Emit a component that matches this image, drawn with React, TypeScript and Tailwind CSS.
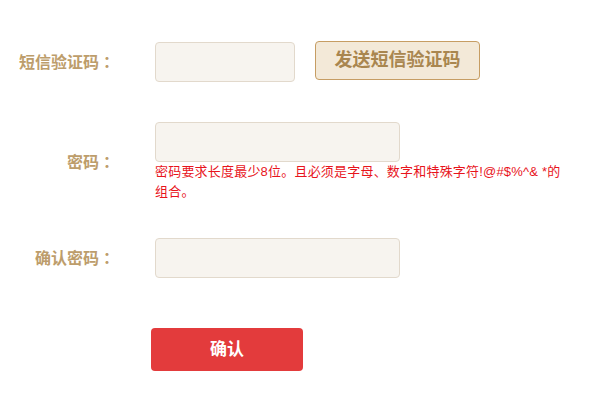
import React from "react";

function Colon() {
  return <span className="[font-family:'Noto_Sans_CJK_TC',sans-serif]">：</span>;
}

export default function App() {
  return (
    <div className="w-[601px] h-[400px] bg-white pt-[42px] [font-family:'Liberation_Sans','Noto_Sans_CJK_SC',sans-serif]">
      <div className="flex items-center">
        <div className="w-[115px] text-right text-[16px] font-bold text-[#bd9d6b] leading-none">
          短信验证码<Colon />
        </div>
        <div className="ml-[40px] w-[140px] h-[40px] rounded-[4px] border border-[#e2d9cc] bg-[#f7f4ef]" />
        <button className="ml-[20px] w-[165px] h-[39px] -mt-[3px] rounded-[4px] border border-[#c69d63] bg-[#f3e9d8] text-[18px] font-bold text-[#a9864f]">
          发送短信验证码
        </button>
      </div>
      <div className="flex items-center mt-[40px]">
        <div className="w-[115px] text-right text-[16px] font-bold text-[#bd9d6b] leading-none">
          密码<Colon />
        </div>
        <div className="ml-[40px] flex flex-col">
          <div className="w-[245px] h-[40px] rounded-[4px] border border-[#e2d9cc] bg-[#f7f4ef]" />
          <div className="text-[13px] leading-[20px] tracking-[0.2px] text-[#e8141c]">
            密码要求长度最少8位。且必须是字母、数字和特殊字符!@#$%^&amp; *的
            <br />
            组合。
          </div>
        </div>
      </div>
      <div className="flex items-center mt-[36px]">
        <div className="w-[115px] text-right text-[16px] font-bold text-[#bd9d6b] leading-none">
          确认密码<Colon />
        </div>
        <div className="ml-[40px] w-[245px] h-[40px] rounded-[4px] border border-[#e2d9cc] bg-[#f7f4ef]" />
      </div>
      <div className="mt-[50px] ml-[151px]">
        <button className="w-[152px] h-[43px] rounded-[4px] bg-[#e33b3c] text-white text-[17px] font-bold">确认</button>
      </div>
    </div>
  );
}
